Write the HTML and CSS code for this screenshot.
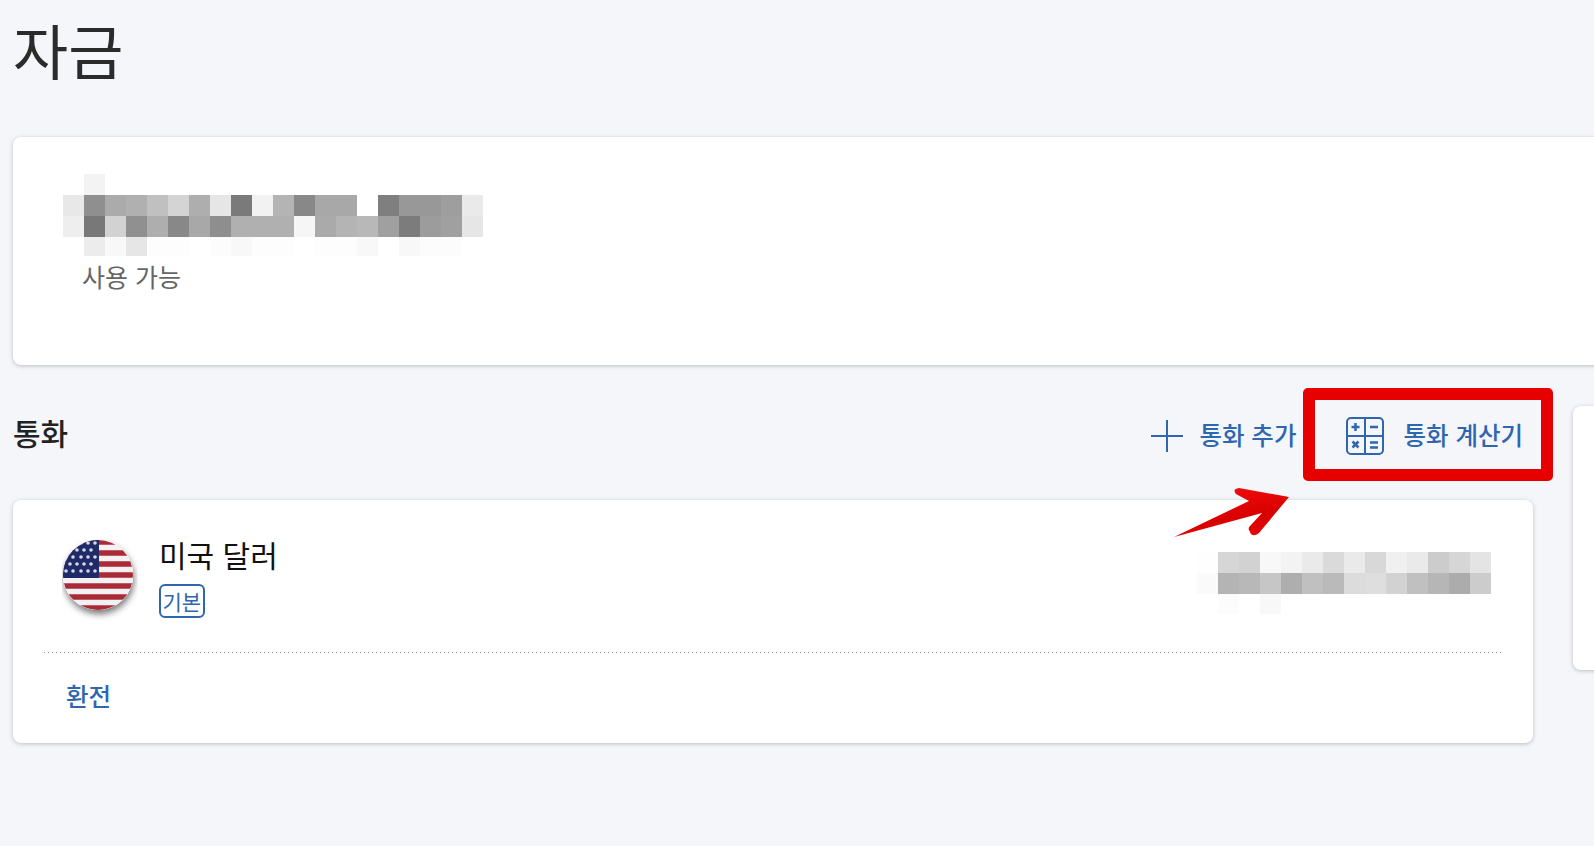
FILE: index.html
```html
<!DOCTYPE html>
<html lang="ko">
<head>
  <meta charset="UTF-8" />
  <meta name="viewport" content="width=device-width, initial-scale=1.0"/>
  <title>자금</title>
  <link rel="stylesheet" href="styles.css">
</head>
<body>

  <h1 class="page-title">자금</h1>

  <section class="card balance-card">
    <svg class="mosaic" width="420" height="82" viewBox="0 0 20 3.9" shape-rendering="crispEdges">
      <rect x="1" y="0" width="1" height="1" fill="#f3f3f3"/>
      <rect x="0" y="1" width="1" height="1" fill="#e8e8e8"/><rect x="1" y="1" width="1" height="1" fill="#8f8f8f"/><rect x="2" y="1" width="1" height="1" fill="#ababab"/><rect x="3" y="1" width="1" height="1" fill="#b0b0b0"/><rect x="4" y="1" width="1" height="1" fill="#c0c0c0"/><rect x="5" y="1" width="1" height="1" fill="#d4d4d4"/><rect x="6" y="1" width="1" height="1" fill="#aeaeae"/><rect x="7" y="1" width="1" height="1" fill="#e6e6e6"/><rect x="8" y="1" width="1" height="1" fill="#7a7a7a"/><rect x="9" y="1" width="1" height="1" fill="#f2f2f2"/><rect x="10" y="1" width="1" height="1" fill="#b4b4b4"/><rect x="11" y="1" width="1" height="1" fill="#888888"/><rect x="12" y="1" width="2" height="1" fill="#a8a8a8"/><rect x="15" y="1" width="1" height="1" fill="#7f7f7f"/><rect x="16" y="1" width="2" height="1" fill="#989898"/><rect x="18" y="1" width="1" height="1" fill="#9e9e9e"/><rect x="19" y="1" width="1" height="1" fill="#eaeaea"/>
      <rect x="0" y="2" width="1" height="1" fill="#eeeeee"/><rect x="1" y="2" width="1" height="1" fill="#787878"/><rect x="2" y="2" width="1" height="1" fill="#d2d2d2"/><rect x="3" y="2" width="1" height="1" fill="#909090"/><rect x="4" y="2" width="1" height="1" fill="#aeaeae"/><rect x="5" y="2" width="1" height="1" fill="#888888"/><rect x="6" y="2" width="1" height="1" fill="#a8a8a8"/><rect x="7" y="2" width="1" height="1" fill="#8e8e8e"/><rect x="8" y="2" width="3" height="1" fill="#b0b0b0"/><rect x="11" y="2" width="1" height="1" fill="#f6f6f6"/><rect x="12" y="2" width="1" height="1" fill="#aaaaaa"/><rect x="13" y="2" width="1" height="1" fill="#b4b4b4"/><rect x="14" y="2" width="1" height="1" fill="#b8b8b8"/><rect x="15" y="2" width="1" height="1" fill="#a0a0a0"/><rect x="16" y="2" width="1" height="1" fill="#7c7c7c"/><rect x="17" y="2" width="1" height="1" fill="#9c9c9c"/><rect x="18" y="2" width="1" height="1" fill="#a0a0a0"/><rect x="19" y="2" width="1" height="1" fill="#e6e6e6"/>
      <rect x="1" y="3" width="1" height="0.9" fill="#ececec"/><rect x="2" y="3" width="1" height="0.9" fill="#f8f8f8"/><rect x="3" y="3" width="1" height="0.9" fill="#e6e6e6"/><rect x="4" y="3" width="2" height="0.9" fill="#fdfdfd"/><rect x="7" y="3" width="1" height="0.9" fill="#fcfcfc"/><rect x="8" y="3" width="1" height="0.9" fill="#f8f8f8"/><rect x="9" y="3" width="2" height="0.9" fill="#fdfdfd"/><rect x="12" y="3" width="2" height="0.9" fill="#fdfdfd"/><rect x="14" y="3" width="1" height="0.9" fill="#f8f8f8"/><rect x="16" y="3" width="1" height="0.9" fill="#f8f8f8"/><rect x="17" y="3" width="2" height="0.9" fill="#fcfcfc"/>
    </svg>
    <p class="balance-label">사용 가능</p>
  </section>

  <div class="columns">
    <div class="main-col">
      <div class="section-head">
        <h2>통화</h2>
        <div class="actions">
          <a class="action action-add" href="#">
            <svg width="34" height="34" viewBox="0 0 34 34"><path d="M17 1v32M1 17h32" stroke="#2e66b0" stroke-width="2" fill="none"/></svg>
            통화 추가
          </a>
          <a class="action action-calc" href="#">
            <svg width="38" height="38" viewBox="0 0 38 38" fill="none" stroke="#2e66b0">
              <rect x="1" y="1" width="36" height="36" rx="4" stroke-width="2"/>
              <path d="M19 1v36M1 19h36" stroke-width="2"/>
              <path d="M5.500 10h8M9.500 6v8M24 10h8M6.500 24.500l6 6M12.500 24.500l-6 6M24 25.500h8M24 30.500h8" stroke-width="2.500"/>
            </svg>
            통화 계산기
          </a>
        </div>
      </div>

      <section class="card currency-card">
        <div class="currency-row">
          <svg class="flag" width="76" height="82" viewBox="0 0 76 82">
            <defs>
              <clipPath id="flag-clip"><circle cx="36" cy="36" r="35"/></clipPath>
              <filter id="flag-shadow" x="-20%" y="-20%" width="140%" height="140%"><feDropShadow dx="1" dy="4" stdDeviation="3.500" flood-color="#000" flood-opacity=".55"/></filter>
            </defs>
            <circle cx="36" cy="36" r="35" fill="#fff" filter="url(#flag-shadow)"/>
            <g clip-path="url(#flag-clip)">
              <rect width="72" height="72" fill="#f4f1f3"/>
              <path d="M0 3h72M0 14h72M0 25h72M0 36h72M0 47h72M0 58h72M0 69h72" stroke="#a92b37" stroke-width="5.500"/>
              <rect width="37" height="39" fill="#1f2a66"/>
              <g fill="#d5d9ec">
                <circle cx="19" cy="4" r="1.800"/><circle cx="26" cy="4" r="1.800"/><circle cx="33" cy="4" r="1.800"/>
                <circle cx="8" cy="11" r="1.800"/><circle cx="15" cy="11" r="1.800"/><circle cx="22" cy="11" r="1.800"/><circle cx="29" cy="11" r="1.800"/>
                <circle cx="4" cy="18" r="1.800"/><circle cx="11" cy="18" r="1.800"/><circle cx="19" cy="18" r="1.800"/><circle cx="26" cy="18" r="1.800"/><circle cx="33" cy="18" r="1.800"/>
                <circle cx="8" cy="25" r="1.800"/><circle cx="15" cy="25" r="1.800"/><circle cx="22" cy="25" r="1.800"/><circle cx="29" cy="25" r="1.800"/>
                <circle cx="4" cy="32" r="1.800"/><circle cx="11" cy="32" r="1.800"/><circle cx="19" cy="32" r="1.800"/><circle cx="26" cy="32" r="1.800"/><circle cx="33" cy="32" r="1.800"/>
              </g>
            </g>
          </svg>
          <div class="currency-info">
            <div class="currency-name">미국 달러</div>
            <span class="badge">기본</span>
          </div>
          <svg class="mosaic mosaic-right" width="294" height="63" viewBox="0 0 14 3" shape-rendering="crispEdges">
            <rect x="0" y="0" width="1" height="1" fill="#fefefe"/><rect x="1" y="0" width="1" height="1" fill="#d6d6d6"/><rect x="2" y="0" width="1" height="1" fill="#d2d2d2"/><rect x="3" y="0" width="1" height="1" fill="#f8f8f8"/><rect x="4" y="0" width="1" height="1" fill="#f3f3f3"/><rect x="5" y="0" width="1" height="1" fill="#eaeaea"/><rect x="6" y="0" width="1" height="1" fill="#dadada"/><rect x="7" y="0" width="1" height="1" fill="#eaeaea"/><rect x="8" y="0" width="1" height="1" fill="#d8d8d8"/><rect x="9" y="0" width="1" height="1" fill="#f0f0f0"/><rect x="10" y="0" width="1" height="1" fill="#eaeaea"/><rect x="11" y="0" width="1" height="1" fill="#cccccc"/><rect x="12" y="0" width="1" height="1" fill="#d6d6d6"/><rect x="13" y="0" width="1" height="1" fill="#e4e4e4"/>
            <rect x="0" y="1" width="1" height="1" fill="#fafafa"/><rect x="1" y="1" width="1" height="1" fill="#b4b4b4"/><rect x="2" y="1" width="1" height="1" fill="#b8b8b8"/><rect x="3" y="1" width="1" height="1" fill="#c6c6c6"/><rect x="4" y="1" width="1" height="1" fill="#aeaeae"/><rect x="5" y="1" width="1" height="1" fill="#c0c0c0"/><rect x="6" y="1" width="1" height="1" fill="#bababa"/><rect x="7" y="1" width="1" height="1" fill="#dcdcdc"/><rect x="8" y="1" width="1" height="1" fill="#dedede"/><rect x="9" y="1" width="1" height="1" fill="#d2d2d2"/><rect x="10" y="1" width="1" height="1" fill="#c0c0c0"/><rect x="11" y="1" width="1" height="1" fill="#b6b6b6"/><rect x="12" y="1" width="1" height="1" fill="#acacac"/><rect x="13" y="1" width="1" height="1" fill="#cccccc"/>
            <rect x="1" y="2" width="1" height="0.95" fill="#fcfcfc"/><rect x="3" y="2" width="1" height="0.95" fill="#f8f8f8"/>
          </svg>
        </div>
        <div class="divider"></div>
        <div class="card-foot">
          <a class="exchange-link" href="#">환전</a>
        </div>
      </section>
    </div>

    <aside class="card side-card"></aside>
  </div>

  <!-- annotation drawn over the screenshot -->
  <div class="callout-box"></div>
  <svg class="callout-arrow" width="130" height="60" viewBox="0 0 130 60">
    <defs>
      <linearGradient id="arrow-red" x1="0.3" y1="0" x2="0.7" y2="1">
        <stop offset="0" stop-color="#f40e0e"/>
        <stop offset="0.6" stop-color="#d80000"/>
        <stop offset="1" stop-color="#e60505"/>
      </linearGradient>
    </defs>
    <path d="M0 53 L75 17 L62 10 Q58 5 65 4 L115 13 L85 49 Q80 53 77 50 L75 46 Q74 44 76 42 L88 29 Z" fill="url(#arrow-red)"/>
  </svg>

</body>
</html>
```

FILE: styles.css
```css
* {
  margin: 0; padding: 0; box-sizing: border-box;
  font-family: "Noto Sans CJK KR", "Noto Sans", sans-serif;
}
html, body {
  width: 1594px; height: 846px;
  overflow: hidden;
}
body {
  background: #f5f6fa;
  color: #2b2b2b;
  position: relative;
  padding-left: 13px;
}
a { text-decoration: none; }

.page-title {
  height: 137px;
  padding-top: 5px;
  font-size: 60px; font-weight: 400;
  line-height: 88px;
}

.card {
  background: #fff;
  border-radius: 8px;
  box-shadow: 0 1px 4px rgba(60,64,80,0.3);
}
.mosaic { display: block; }

/* BALANCE */
.balance-card {
  width: 1600px; height: 228px;
  padding: 37px 0 0 50px;
}
.balance-label {
  margin: 2px 0 0 19px;
  font-size: 25px; line-height: 36px;
  color: #666;
}

/* CURRENCIES */
.columns {
  display: flex; gap: 40px;
  width: 1620px;
  margin-top: 41px;
}
.main-col { width: 1520px; flex: none; }
.side-card { flex: none; width: 60px; height: 264px; }

.section-head {
  display: flex; justify-content: space-between; align-items: center;
  height: 94px;
  padding-right: 10px;
}
.section-head h2 {
  font-size: 30px; font-weight: 500;
  margin-top: -42px;
  color: #222;
}
.actions {
  display: flex; align-items: center;
  margin-top: -38px;
}
.action {
  display: flex; align-items: center;
  font-size: 24.5px; font-weight: 500;
  color: #2e66b0;
}
.action svg { margin-top: 3px; }
.action-add { gap: 15px; }
.action-calc { gap: 19px; margin-left: 50px; }

.currency-card { height: 243px; padding: 39px 31px 0; }
.currency-row {
  display: flex; align-items: flex-start;
  height: 113px;
  padding: 0 11px 0 18px;
}
.flag { flex: none; }
.currency-info { margin-left: 21px; margin-top: -7px; }
.currency-name {
  font-size: 30px; line-height: 44px;
  color: #111;
}
.badge {
  display: inline-block;
  height: 34px;
  padding: 0 1.500px;
  margin-top: 8px;
  border: 2px solid #2e66b0; border-radius: 6px;
  font-size: 21px; line-height: 30px;
  color: #2e66b0;
}
.mosaic-right { margin: 13px 0 0 auto; }
.divider {
  height: 1px;
  background: repeating-linear-gradient(90deg, #999 0 1px, transparent 1px 4px);
}
.card-foot { padding: 21px 0 0 22px; }
.exchange-link {
  font-size: 24.5px; font-weight: 500;
  line-height: 44px;
  color: #2e66b0;
}

/* RED ANNOTATION */
.callout-box {
  position: absolute; left: 1303px; top: 388px;
  width: 250px; height: 93px;
  border: 12px solid #e60000;
  border-radius: 5px;
}
.callout-arrow {
  position: absolute; left: 1174px; top: 484px;
}
```
